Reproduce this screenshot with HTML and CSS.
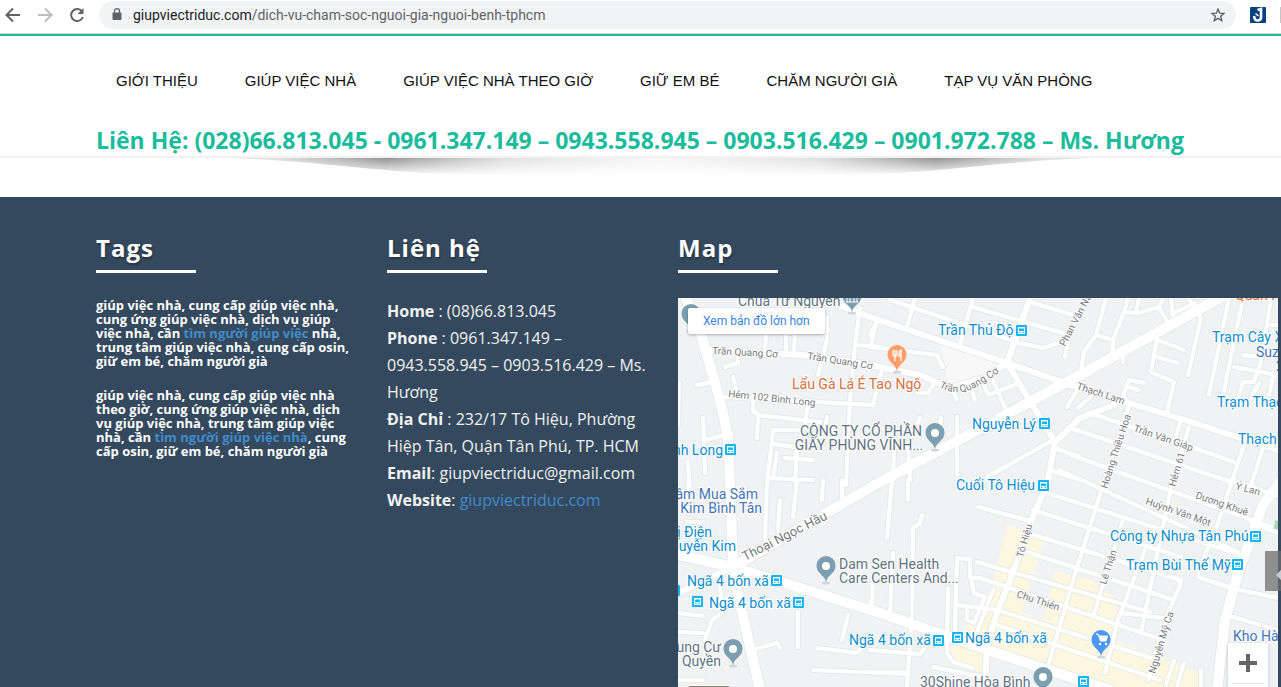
FILE: index.html
```html
<!DOCTYPE html>
<html lang="vi">
<head>
  <meta charset="UTF-8" />
  <title>Dịch vụ chăm sóc người già, người bệnh TPHCM</title>
  <link rel="stylesheet" href="styles.css">
</head>
<body>

  <div class="toolbar">
    <button class="tool" aria-label="Back">
      <svg width="16" height="16" viewBox="0 0 16 16"><path d="M15 8H2M8 1.500L1.500 8L8 14.500" fill="none" stroke="#5f6368" stroke-width="2"/></svg>
    </button>
    <button class="tool" aria-label="Forward">
      <svg width="16" height="16" viewBox="0 0 16 16"><path d="M1 8H14M8 1.500L14.500 8L8 14.500" fill="none" stroke="#babcbe" stroke-width="2"/></svg>
    </button>
    <button class="tool" aria-label="Reload">
      <svg width="16" height="16" viewBox="0 0 16 16"><path d="M13 4.500A6 6 0 1 0 13.800 10" fill="none" stroke="#5f6368" stroke-width="2"/><path d="M14.500 1V7H8.500z" fill="#5f6368"/></svg>
    </button>
    <div class="address">
      <svg width="10" height="13" viewBox="0 0 10 13"><rect x="0.500" y="4.500" width="9" height="7.500" rx="1" fill="#5f6368"/><path d="M2.500 5V3.200a2.500 2.500 0 0 1 5 0V5" fill="none" stroke="#5f6368" stroke-width="1.300"/></svg>
      <span class="url"><b>giupviectriduc.com</b>/dich-vu-cham-soc-nguoi-gia-nguoi-benh-tphcm</span>
      <button class="star" aria-label="Bookmark">
        <svg width="14" height="14" viewBox="0 0 14 14"><path d="M7 1.200L8.700 5.200L13 5.500L9.700 8.300L10.700 12.600L7 10.300L3.300 12.600L4.300 8.300L1 5.500L5.300 5.200z" fill="none" stroke="#5f6368" stroke-width="1.400"/></svg>
      </button>
    </div>
    <button class="extension" aria-label="Extension">
      <svg width="16" height="16" viewBox="0 0 16 16"><rect width="16" height="16" rx="1" fill="#0b4182"/><path d="M7.500 3L11 2V10A3.300 3.300 0 0 1 4.500 11L4 9" fill="none" stroke="#fff" stroke-width="2.600"/><path d="M5.500 6.500l3 2.500" stroke="#fff" stroke-width="1.500"/></svg>
    </button>
    <span class="divider"></span>
  </div>

  <header class="header">
    <nav class="menu">
      <a href="#">GIỚI THIỆU</a>
      <a href="#">GIÚP VIỆC NHÀ</a>
      <a href="#">GIÚP VIỆC NHÀ THEO GIỜ</a>
      <a href="#">GIỮ EM BÉ</a>
      <a href="#">CHĂM NGƯỜI GIÀ</a>
      <a href="#">TẠP VỤ VĂN PHÒNG</a>
    </nav>
    <h2 class="hotline">Liên Hệ: (028)66.813.045 - 0961.347.149 – 0943.558.945 – 0903.516.429 – 0901.972.788 – Ms. Hương</h2>
  </header>

  <div class="shadow">
    <svg width="960" height="24" viewBox="0 0 960 24">
      <defs>
        <linearGradient id="fadeX">
          <stop offset="0.050" stop-color="#999" stop-opacity="0.300"/>
          <stop offset="0.180" stop-color="#808080" stop-opacity="0.850"/>
          <stop offset="0.320" stop-color="#999" stop-opacity="0.300"/>
          <stop offset="0.500" stop-color="#bbb" stop-opacity="0.120"/>
          <stop offset="0.680" stop-color="#999" stop-opacity="0.300"/>
          <stop offset="0.820" stop-color="#808080" stop-opacity="0.850"/>
          <stop offset="0.950" stop-color="#999" stop-opacity="0.300"/>
        </linearGradient>
        <linearGradient id="fadeY" x2="0" y2="1">
          <stop offset="0" stop-color="#fff"/>
          <stop offset="1" stop-color="#fff" stop-opacity="0"/>
        </linearGradient>
        <mask id="fade"><rect width="960" height="18" fill="url(#fadeY)"/></mask>
      </defs>
      <path d="M50 0C130 3 170 10 240 15Q480 24 720 15C790 10 830 3 910 0z" fill="url(#fadeX)" mask="url(#fade)"/>
    </svg>
  </div>

  <footer class="footer">
    <section class="column">
      <h3>Tags</h3>
      <h4>giúp việc nhà, cung cấp giúp việc nhà, cung ứng giúp việc nhà, dịch vụ giúp việc nhà, cần <a href="#">tìm người giúp việc</a> nhà, trung tâm giúp việc nhà, cung cấp osin, giữ em bé, chăm người già</h4>
      <h4>giúp việc nhà, cung cấp giúp việc nhà theo giờ, cung ứng giúp việc nhà, dịch vụ giúp việc nhà, trung tâm giúp việc nhà, cần <a href="#">tìm người giúp việc nhà</a>, cung cấp osin, giữ em bé, chăm người già</h4>
    </section>

    <section class="column">
      <h3>Liên hệ</h3>
      <p class="contact">
        <strong>Home</strong> : (08)66.813.045<br>
        <strong>Phone</strong> : 0961.347.149 – 0943.558.945 – 0903.516.429 – Ms. Hương<br>
        <strong>Địa Chỉ</strong> : 232/17 Tô Hiệu, Phường Hiệp Tân, Quận Tân Phú, TP. HCM<br>
        <strong>Email</strong>: giupviectriduc@gmail.com<br>
        <strong>Website</strong>: <a href="#">giupviectriduc.com</a>
      </p>
    </section>

    <section class="column map-column">
      <h3>Map</h3>
      <div class="map">
        <svg class="map-canvas" viewBox="678 298 600 389" preserveAspectRatio="xMinYMin slice">
          <defs>
            <g id="lanes">
              <path d="M766 335L765 350M786 333V353M795 333L794 353M786 333H795M827 317V340L818 375M860 308L855 345L850 400L846 485M857 345L880 347M870 335L877 322M723 397L817 402L873 405L880 375M733 377L737 392M697 385L713 382M725 367L738 363V350M679 383L678 425M703 418L705 473M707 440L724 435M688 462L690 490M753 395V411L758 415L820 422M758 416L757 438M808 405L805 422M798 430H773L767 485M773 444L795 447M777 453L773 478M768 478L813 480M785 458L813 460M797 448L795 482M827 417L825 430"/>
              <path d="M890 300L1020 343L1043 348L1068 340M973 307L1070 335M1030 302L1080 317M915 298L907 327M973 298L960 345M875 325L871 345M870 347L937 355L943 367M935 382L928 393H917M957 400L953 390M970 385L975 400M993 380L1007 412M983 383L988 395L1020 383M882 370L873 405M957 417V475M920 418L915 428M941 418L940 425M895 425L893 480M908 443L910 480M987 477L1053 440M1055 448L1080 457M1050 470L1080 480M1068 427L1080 432M1070 332L1065 357M1080 385L1067 407"/>
              <path d="M1106 298L1096 335L1084 352L1081 370M1128 298L1124 312L1113 340V352M1096 335L1113 340M1126 312L1138 313L1159 307L1168 323M1139 298L1136 312M1159 307L1163 298M1171 298L1173 315M1172 314L1195 303M1188 298L1201 318L1188 375M1123 350V362M1158 332L1151 372L1174 382L1167 412M1158 340L1184 350M1157 357L1178 363M1129 405L1123 395L1129 380L1144 383M1128 387L1138 390M1229 298L1209 395M1243 298L1223 395M1271 298L1261 362L1254 382L1243 382L1238 398M1243 355L1261 357M1234 367L1278 375M1273 378L1269 395M1271 325H1278M1259 383L1251 398"/>
              <path d="M1090 413L1134 428L1194 448L1234 462M1071 428L1231 482M1071 455L1271 527M1060 470L1238 552M1091 397L1078 408M1244 445L1214 535L1199 568L1198 577L1231 588L1278 598M1263 448L1251 485M1180 423L1174 443M1189 427L1171 487L1141 633M1129 405L1103 485L1071 587L1047 670M1232 480L1278 496M1251 523L1278 533M1033 510L1181 557M1047 493L1238 554M1027 533L1181 580M1027 552L1174 600M978 507L1027 520M1123 520L1093 617M1145 550L1118 620L1105 673M1181 583L1168 613L1148 680M1181 583L1174 577M1121 613L1163 618M1233 617L1278 630M1174 661L1166 685M1184 663L1177 687M1201 670V687"/>
              <path d="M892 480L887 538M908 480V500M922 515L920 523L913 528L912 613L907 687M893 553L890 613M873 588L870 613M948 588L947 653L953 662L973 668M957 558L970 559V577L987 580M957 560L955 630M970 573L974 593L985 597L974 623L967 620V607M958 605L997 610L1158 660M977 562L1150 612M980 578L1010 588L1163 640M997 625L1160 680M1002 655L1050 668M993 590L975 637M870 650L920 654L925 647M933 667L983 677M870 672H907"/>
              <path d="M688 480V513M703 522H687M767 480L765 540M780 500L778 530M797 480L793 517M823 480L822 500M842 480V497M720 583L722 613L712 620L705 640M798 612V647M848 615L842 640M753 650L777 643L780 648M817 648L857 653L862 647M813 670L907 674M678 613L703 616M678 632L703 633M678 680H703M872 583V613"/>
            </g>
            <g id="streets">
              <path d="M707 350L803 355L870 365L920 375L950 388L985 378L1007 363M820 298L870 317L1007 363L1080 388L1188 421L1278 450M1030 298L1007 363L1055 442L1047 485L1030 523L1010 580L997 613L987 645L985 687M1055 442L1080 418L1114 405M678 593L733 567"/>
            </g>
            <g id="avenues">
              <path d="M686 298L702 338L712 372L722 408L728 438L730 485L733 560L737 590L760 690M733 567L880 482L1080 375L1225 295M678 555L733 567L880 613L987 650L1110 690M1285 475L1263 505L1238 573L1225 620L1217 690"/>
            </g>
            <g id="stop">
              <rect width="11" height="11" rx="1" fill="#12b5f5"/>
              <path d="M2 2h7v7h-7z" fill="#fff"/>
              <path d="M3 3.500h5v2.500h-5z" fill="#12b5f5"/>
              <path d="M3 7h1.500v1h-1.500zM6.500 7h1.500v1h-1.500z" fill="#12b5f5"/>
            </g>
            <g id="pin">
              <ellipse cy="1" rx="4" ry="1.500" fill="#d3d6d8"/>
              <path d="M0 0C-1-7-9.500-8-9.500-16.500a9.500 9.500 0 0 1 19 0C9.500-8 1-7 0 0z"/>
            </g>
            <path id="coCurve" d="M939 387Q958 398 978 386Q995 376 1006 367"/>
          </defs>

          <rect x="678" y="298" width="600" height="389" fill="#f1f2f4"/>
          <path d="M945 345L990 361L998 367L965 386L948 382L941 350z" fill="#f8f8f9"/>
          <path d="M1007 525L1044 540L1036 566L1090 580L1118 600L1112 640L1200 673V687H1120L950 650L968 625L992 588z" fill="#fef7e0"/>
          <path d="M1036 566L1055 570L1044 620L1022 612z" fill="#f1f2f4"/>
          <path d="M950 647L987 660V674L955 664z" fill="#fef7e0"/>
          <path d="M1275 520l5 2v10l-6-2z" fill="#a8dab5"/>

          <use href="#lanes" class="lane-edge"/>
          <use href="#streets" class="street-edge"/>
          <use href="#avenues" class="avenue-edge"/>
          <use href="#lanes" class="lane"/>
          <use href="#streets" class="street"/>
          <use href="#avenues" class="avenue"/>

          <g class="road-name">
            <text x="712" y="354" transform="rotate(3 712 354)">Trần Quang Cơ</text>
            <text x="807" y="359" transform="rotate(9 807 359)">Trần Quang Cơ</text>
            <text><textPath href="#coCurve">Trần Quang Cơ</textPath></text>
            <text x="728" y="397" transform="rotate(6 728 397)">Hẻm 102 Bình Long</text>
            <text x="1065" y="347" transform="rotate(-62 1065 347)">Phan Văn Năm</text>
            <text x="1076" y="389" transform="rotate(18 1076 389)">Thạch Lam</text>
            <text x="1133" y="431" transform="rotate(19 1133 431)">Trần Văn Giáp</text>
            <text x="1107" y="489" transform="rotate(-72 1107 489)">Hoàng Thiều Hoa</text>
            <text x="1175" y="487" transform="rotate(-73 1175 487)">Hẻm 61</text>
            <text x="1235" y="489" transform="rotate(15 1235 489)">Ý Lan</text>
            <text x="1195" y="498" transform="rotate(19 1195 498)">Dương Khuê</text>
            <text x="1145" y="504" transform="rotate(19 1145 504)">Huỳnh Văn Một</text>
            <text x="1106" y="585" transform="rotate(-72 1106 585)">Lê Thận</text>
            <text x="1023" y="558" transform="rotate(-74 1023 558)">Tô Hiệu</text>
            <text x="1016" y="597" transform="rotate(18 1016 597)">Chu Thiên</text>
            <text x="1155" y="674" transform="rotate(-73 1155 674)">Nguyễn Mỹ Ca</text>
            <text class="big" x="745" y="561" transform="rotate(-27 745 561)">Thoại Ngọc Hầu</text>
          </g>

          <g class="place transit">
            <text x="938" y="335">Trần Thủ Độ</text>
            <text x="972" y="429">Nguyễn Lý</text>
            <text x="956" y="490">Cuối Tô Hiệu</text>
            <text x="723" y="455" text-anchor="end">Bình Long</text>
            <text x="712" y="537" text-anchor="end">Thị Điện</text>
            <text x="736" y="551" text-anchor="end">Nguyễn Kim</text>
            <text x="687" y="586">Ngã 4 bốn xã</text>
            <text x="709" y="608">Ngã 4 bốn xã</text>
            <text x="849" y="645">Ngã 4 bốn xã</text>
            <text x="965" y="643">Ngã 4 bốn xã</text>
            <text x="1110" y="541">Công ty Nhựa Tân Phú</text>
            <text x="1126" y="570">Trạm Bùi Thế Mỹ</text>
            <text x="1212" y="342">Trạm Cây Xăng</text>
            <text x="1217" y="407">Trạm Thạch Lam</text>
            <text x="1238" y="444">Thạch Lam</text>
          </g>
          <g class="place shop">
            <text x="758" y="499" text-anchor="end">Trung Tâm Mua Sắm</text>
            <text x="762" y="513" text-anchor="end">Nguyễn Kim Bình Tân</text>
            <text x="1256" y="357">Suzuki</text>
            <text x="1276" y="371">2</text>
            <text x="1233" y="641">Kho Hàng</text>
          </g>
          <g class="place food">
            <text x="792" y="389">Lẩu Gà Lá É Tao Ngộ</text>
            <text x="1235" y="300">Quán Nướng</text>
          </g>
          <g class="place">
            <text x="738" y="306">Chùa Từ Nguyên</text>
            <text x="861" y="436" text-anchor="middle">CÔNG TY CỔ PHẦN</text>
            <text x="859" y="450" text-anchor="middle">GIẤY PHÙNG VĨNH...</text>
            <text x="839" y="569">Dam Sen Health</text>
            <text x="839" y="583">Care Centers And...</text>
            <text x="721" y="652" text-anchor="end">Chung Cư</text>
            <text x="721" y="666" text-anchor="end">Ngô Quyền</text>
            <text x="920" y="687">30Shine Hòa Bình</text>
          </g>

          <use href="#stop" x="1016" y="325"/>
          <use href="#stop" x="1039" y="418"/>
          <use href="#stop" x="1038" y="480"/>
          <use href="#stop" x="725" y="444"/>
          <use href="#stop" x="771" y="575"/>
          <use href="#stop" x="692" y="596"/>
          <use href="#stop" x="793" y="597"/>
          <use href="#stop" x="933" y="635"/>
          <use href="#stop" x="952" y="632"/>
          <use href="#stop" x="1078" y="676"/>
          <use href="#stop" x="1250" y="531"/>
          <use href="#stop" x="1232" y="559"/>
          <use href="#stop" x="669" y="585"/>

          <g fill="#7b9eb0">
            <use href="#pin" x="852" y="312"/>
            <use href="#pin" x="691" y="330"/>
            <use href="#pin" x="935" y="449"/>
            <use href="#pin" x="826" y="582"/>
            <use href="#pin" x="733" y="665"/>
            <use href="#pin" x="1043" y="693"/>
          </g>
          <path d="M847 302v-6M850 302v-6M854 302v-6M857 302v-6M846 302h12" stroke="#fff" fill="none"/>
          <g fill="#fff">
            <circle cx="935" cy="433" r="4"/>
            <circle cx="826" cy="566" r="4"/>
            <circle cx="733" cy="649" r="4"/>
            <circle cx="1043" cy="677" r="4"/>
          </g>
          <use href="#pin" x="897" y="371" fill="#ff9e67"/>
          <path d="M893 350v4q0 2 2 2t2-2v-4M895 350v11M901 361v-11q-2 1-2 6h2" fill="none" stroke="#fff" stroke-width="1.300"/>
          <use href="#pin" x="1101" y="656" fill="#4e96f5"/>
          <path d="M1096 634h2l2.500 7h5.500l1.500-5h-8.500" fill="#fff" stroke="#fff"/>
          <circle cx="1100" cy="644" r="1.200" fill="#fff"/>
          <circle cx="1106" cy="644" r="1.200" fill="#fff"/>
        </svg>
        <a class="map-link" href="#">Xem bản đồ lớn hơn</a>
        <span class="map-layer"></span>
        <button class="map-zoom" aria-label="Phóng to">
          <svg width="18" height="18" viewBox="0 0 18 18"><path d="M9 0V18M0 9H18" stroke="#666" stroke-width="4"/></svg>
        </button>
      </div>
    </section>
  </footer>

  <button class="side-tab" aria-label="Open panel">
    <svg width="16" height="40" viewBox="0 0 16 40"><path d="M11 24L16 19V29z" fill="#c5ccd2"/></svg>
  </button>

</body>
</html>
```
FILE: styles.css
```css
body {
  margin: 0;
  background: #fff;
  font-family: 'Open Sans', 'Noto Sans', sans-serif;
  min-height: 100vh;
  display: flex;
  flex-direction: column;
  position: relative;
  overflow: hidden;
}
* {
  box-sizing: border-box;
}
button {
  background: none;
  border: 0;
  padding: 0;
  cursor: pointer;
}
svg {
  display: block;
}
a {
  color: #428bca;
  text-decoration: none;
}

/* browser bar */
.toolbar {
  height: 34px;
  padding: 0 0 4px 5px;
  display: flex;
  align-items: center;
  gap: 16px;
  border-bottom: 1px solid #dadce0;
}
.address {
  flex: 1;
  height: 28px;
  margin-left: -2px;
  padding: 0 11px 0 13px;
  border-radius: 14px;
  background: #f1f3f4;
  display: flex;
  align-items: center;
}
.url {
  flex: 1;
  margin-left: 11px;
  font-family: Roboto, sans-serif;
  font-size: 14px;
  color: #5f6368;
}
.url b {
  font-weight: 400;
  color: #202124;
}
.extension {
  margin-left: -2px;
}
.divider {
  width: 1px;
  height: 16px;
  margin-left: -2px;
  background: #c4c7ca;
}

/* header */
.header {
  border-top: 2px solid #1abc9c;
  border-bottom: 2px solid #f1f1f1;
  height: 124px;
  padding: 0 96px;
}
.menu {
  display: flex;
  gap: 47px;
  padding: 35px 20px 0;
  white-space: nowrap;
}
.menu a {
  font-family: 'Liberation Sans', Arial, sans-serif;
  font-size: 15px;
  line-height: 20px;
  color: #111;
}
.hotline {
  margin: 33px 0 0;
  font-size: 23px;
  line-height: 32px;
  font-weight: 700;
  color: #1abc9c;
  white-space: nowrap;
}
.shadow {
  height: 39px;
  padding-left: 40px;
  display: flex;
  justify-content: center;
}

/* footer */
.footer {
  flex: 1;
  background: #34495e;
  padding: 36px 3px 0 96px;
  display: grid;
  grid-template-columns: 261px 261px minmax(0, 1fr);
  gap: 30px;
  color: #f1f1f1;
}
.column h3 {
  margin: 0 0 25px;
  font-size: 24px;
  line-height: 30px;
  letter-spacing: 1px;
  color: #fff;
  text-shadow: 1px 2px 2px rgba(0, 0, 0, 0.3);
}
.column h3::after {
  content: '';
  display: block;
  width: 100px;
  height: 3px;
  margin-top: 7px;
  background: #fff;
}
.column h4 {
  margin: 0 0 20px;
  font-size: 13px;
  line-height: 14px;
  color: #fff;
}
.contact {
  margin: 0;
  font-size: 16px;
  line-height: 27px;
}
.map-column {
  display: flex;
  flex-direction: column;
}

/* map */
.map {
  flex: 1;
  min-height: 389px;
  position: relative;
  overflow: hidden;
  background: #f1f2f4;
}
.map-canvas {
  position: absolute;
  width: 100%;
  height: 100%;
}
.lane-edge, .street-edge, .avenue-edge, .lane, .street, .avenue {
  fill: none;
  stroke-linecap: round;
  stroke-linejoin: round;
}
.lane-edge, .street-edge, .avenue-edge {
  stroke: #e7e9eb;
}
.lane, .street, .avenue {
  stroke: #fff;
}
.lane-edge { stroke-width: 6px; }
.lane { stroke-width: 4px; }
.street-edge { stroke-width: 8px; }
.street { stroke-width: 6px; }
.avenue-edge { stroke-width: 12px; }
.avenue { stroke-width: 10px; }
.road-name, .place {
  font-family: Roboto, sans-serif;
  stroke: #fff;
  stroke-width: 2px;
  stroke-linejoin: round;
  paint-order: stroke;
}
.road-name {
  font-size: 10px;
  fill: #75797d;
}
.road-name .big {
  font-size: 13px;
}
.place {
  font-size: 14px;
  fill: #5d7380;
}
.transit { fill: #0c8ecf; }
.shop { fill: #4374b7; }
.food { fill: #d5703f; }
.map-link {
  position: absolute;
  left: 10px;
  top: 10px;
  padding: 0 15px;
  border-radius: 2px;
  background: #fff;
  box-shadow: 0 1px 3px rgba(0, 0, 0, 0.3);
  font-family: Roboto, sans-serif;
  font-size: 12px;
  line-height: 26px;
  color: #3a84df;
}
.map-layer {
  position: absolute;
  left: 11px;
  bottom: 0;
  width: 40px;
  height: 2px;
  border-top: 1px solid #fff;
  background: #857b74;
}
.map-zoom {
  position: absolute;
  right: 10px;
  bottom: 0;
  width: 40px;
  height: 44px;
  padding: 0 11px 4px;
  background: #fff;
  box-shadow: 0 1px 4px rgba(0, 0, 0, 0.2);
}
.map-zoom::after {
  content: '';
  position: absolute;
  left: 5px;
  right: 5px;
  bottom: 3px;
  height: 1px;
  background: #e6e6e6;
}

/* tab on the window edge */
.side-tab {
  position: absolute;
  right: 0;
  bottom: 96px;
  background: rgba(110, 110, 110, 0.75);
}
```
